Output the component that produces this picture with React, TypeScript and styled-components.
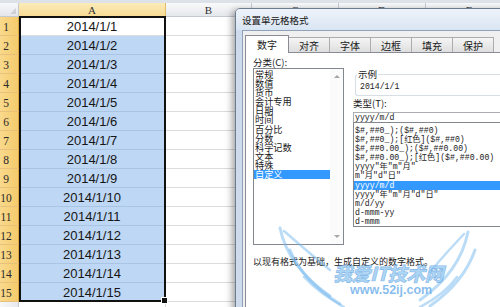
import React from 'react';
import styled, { createGlobalStyle, css } from 'styled-components';

const GlobalStyle = createGlobalStyle`
    html, body {
        margin: 0;
        padding: 0;
        background: #ffffff;
    }
    body {
        font-family: "Noto Sans CJK SC", "Noto Sans", sans-serif;
        color: #1a1a1a;
    }
`;

const Screen = styled.div`
    position: relative;
    width: 500px;
    height: 307px;
    overflow: hidden;
    background: #ffffff;
`;

/* ---------- worksheet ---------- */

const Toolbar = styled.div`
    height: 3px;
    background: #dde2e9;
`;

const Grid = styled.div`
    display: grid;
    grid-template-columns: 19px 147px 86px 87px 87px 87px;
    grid-template-rows: 14px repeat(16, 19px);
`;

type Place = { $r: number; $c: number };

const placed = css<Place>`
    grid-row: ${({ $r }) => $r};
    grid-column: ${({ $c }) => $c};
    box-sizing: border-box;
`;

const Corner = styled.div<Place>`
    ${placed};
    position: relative;
    background: linear-gradient(#f7f8fa, #e3e6ea);
    border-right: 1px solid #c5cad1;
    border-bottom: 1px solid #c5cad1;

    &::after {
        content: '';
        position: absolute;
        right: 2px;
        bottom: 2px;
        border-left: 6px solid transparent;
        border-bottom: 6px solid #cdd1d6;
    }
`;

const ColHeader = styled.div<Place & { $active?: boolean }>`
    ${placed};
    display: flex;
    align-items: center;
    justify-content: center;
    font-family: "Liberation Serif", serif;
    font-size: 11px;
    color: #333;
    background: ${({ $active }) =>
        $active ? 'linear-gradient(#fcebb8, #f8dc95)' : 'linear-gradient(#f9fafb, #e4e7eb)'};
    border-right: 1px solid ${({ $active }) => ($active ? '#e2bd66' : '#c5cad1')};
    border-bottom: 1px solid ${({ $active }) => ($active ? '#e2a93f' : '#c5cad1')};
`;

const RowHeader = styled.div<Place & { $active?: boolean }>`
    ${placed};
    display: flex;
    align-items: flex-end;
    justify-content: center;
    padding: 0 6px 1px 0;
    line-height: 13px;
    font-family: "Liberation Serif", serif;
    font-size: 11.5px;
    color: #2a2a2a;
    background: ${({ $active }) =>
        $active ? 'linear-gradient(90deg, #f9d98c, #f5cb6c)' : 'linear-gradient(90deg, #f7f8fa, #e6e9ed)'};
    border-right: 1px solid ${({ $active }) => ($active ? '#d9a843' : '#c5cad1')};
    border-bottom: 1px solid ${({ $active }) => ($active ? '#e8c27a' : '#d5d9de')};
`;

type Tone = 'active' | 'selected' | 'plain';

const Cell = styled.div<Place & { $tone: Tone }>`
    ${placed};
    display: flex;
    align-items: center;
    justify-content: center;
    font-family: "Liberation Sans", Arial, sans-serif;
    font-size: 13px;
    color: #161616;
    background: ${({ $tone }) => ($tone === 'selected' ? '#bed7f4' : '#ffffff')};
    border-right: 1px solid #d8dadc;
    border-bottom: 1px solid ${({ $tone }) => ($tone === 'selected' ? '#aac4e4' : '#dadcdd')};
`;

const Selection = styled.div`
    grid-column: 2;
    grid-row: 2 / span 15;
    margin-top: -1px;
    border: 2px solid #111111;
    position: relative;
    pointer-events: none;
`;

const FillHandle = styled.span`
    position: absolute;
    right: -4px;
    bottom: -4px;
    width: 5px;
    height: 5px;
    background: #111111;
    border: 1px solid #ffffff;
`;

/* ---------- format cells dialog ---------- */

const Dialog = styled.div`
    position: absolute;
    left: 235px;
    top: 8px;
    width: 285px;
    height: 310px;
    display: flex;
    flex-direction: column;
    border: 1px solid #6d7d90;
    border-radius: 5px 5px 0 0;
    background: #cddbed;
    box-shadow: -3px 2px 7px rgba(0, 0, 0, 0.35);
`;

const TitleBar = styled.div`
    height: 21px;
    flex: none;
    display: flex;
    align-items: center;
    padding-left: 6px;
    font-size: 9.5px;
    color: #111;
    background: linear-gradient(#eef3fa, #d9e5f3);
    border-radius: 4px 4px 0 0;
`;

const Client = styled.div`
    flex: 1;
    display: flex;
    flex-direction: column;
    margin-left: 6px;
    padding: 4px 0 0 2px;
    background: #f0f0f0;
    border-left: 1px solid #8fa2ba;
    border-top: 1px solid #8fa2ba;
`;

const TabStrip = styled.div`
    height: 17px;
    flex: none;
    display: flex;
    align-items: flex-end;
`;

const Tab = styled.div<{ $selected?: boolean; $width: number }>`
    position: relative;
    z-index: ${({ $selected }) => ($selected ? 1 : 0)};
    box-sizing: border-box;
    width: ${({ $width }) => $width}px;
    height: ${({ $selected }) => ($selected ? 18 : 15)}px;
    margin: 0 -1px ${({ $selected }) => ($selected ? -1 : 0)}px 0;
    display: flex;
    align-items: center;
    justify-content: center;
    font-size: 10px;
    color: #1a1a1a;
    border: 1px solid ${({ $selected }) => ($selected ? '#898c95' : '#acacac')};
    border-bottom: none;
    background: ${({ $selected }) => ($selected ? '#ffffff' : 'linear-gradient(#f5f5f5, #dedede)')};
`;

const Page = styled.div`
    flex: 1;
    display: grid;
    grid-template-columns: 91px 1fr;
    align-content: start;
    column-gap: 9px;
    padding-left: 7px;
    background: #ffffff;
    border: 1px solid #898c95;
    font-size: 9.5px;
`;

const Column = styled.div`
    display: flex;
    flex-direction: column;
    min-width: 0;
`;

const FieldLabel = styled.div`
    padding-top: 4px;
    line-height: 11px;
    white-space: nowrap;
`;

const CategoryList = styled.div`
    box-sizing: border-box;
    height: 177px;
    display: flex;
    border: 1px solid #828790;
`;

const CategoryItems = styled.div`
    flex: 1;
    padding-top: 1px;
`;

const CategoryItem = styled.div<{ $selected?: boolean }>`
    height: 9.1px;
    line-height: 9.1px;
    font-size: 9.2px;
    padding-left: 1px;
    white-space: nowrap;
    color: ${({ $selected }) => ($selected ? '#ffffff' : '#1a1a1a')};
    background: ${({ $selected }) => ($selected ? '#3399ff' : 'transparent')};
`;

const ScrollBar = styled.div`
    width: 13px;
    display: flex;
    flex-direction: column;
    justify-content: space-between;
    align-items: center;
    padding: 6px 0;
    background: #fbfbfb;
`;

const Arrow = styled.span<{ $down?: boolean }>`
    width: 0;
    height: 0;
    border-left: 3px solid transparent;
    border-right: 3px solid transparent;
    ${({ $down }) => ($down ? 'border-top: 3px solid #a6a6a6;' : 'border-bottom: 3px solid #a6a6a6;')}
`;

const SampleGroup = styled.div`
    box-sizing: border-box;
    height: 22px;
    margin: 21px 0 0 2px;
    display: flex;
    flex-direction: column;
    border: 1px solid #d5dfe5;
    border-right: none;
    border-radius: 3px 0 0 3px;
`;

const Legend = styled.span`
    align-self: flex-start;
    margin: -6px 0 0 1px;
    padding: 0 1px;
    line-height: 11px;
    background: #ffffff;
`;

const Mono = styled.div`
    font-family: "Liberation Mono", "Noto Sans CJK SC", monospace;
    font-size: 8.2px;
    white-space: pre;
`;

const SampleValue = styled(Mono)`
    margin-top: 2px;
    padding-left: 4px;
    line-height: 10px;
`;

const TypeLabel = styled.div`
    margin-top: 2px;
    line-height: 11px;
`;

const TypeInput = styled(Mono)`
    box-sizing: border-box;
    height: 11px;
    margin-top: 3px;
    padding-left: 1px;
    line-height: 9px;
    border: 1px solid #abadb3;
`;

const TypeList = styled.div`
    box-sizing: border-box;
    height: 105px;
    margin-top: -1px;
    padding-top: 2.5px;
    overflow: hidden;
    border: 1px solid #828790;
    border-right: none;
`;

const FormatItem = styled(Mono)<{ $selected?: boolean }>`
    height: 9.2px;
    line-height: 9.2px;
    padding-left: 1px;
    color: ${({ $selected }) => ($selected ? '#ffffff' : '#1a1a1a')};
    background: ${({ $selected }) => ($selected ? '#3399ff' : 'transparent')};
`;

const Hint = styled.div`
    grid-column: 1 / -1;
    margin-top: 11px;
    line-height: 12px;
    font-size: 9px;
    white-space: nowrap;
`;

/* ---------- site watermark ---------- */

const Watermark = styled.div`
    position: absolute;
    left: 270px;
    top: 222px;
    width: 225px;
    height: 85px;
    pointer-events: none;
    display: flex;
    flex-direction: column;
    padding: 41px 0 0 63px;
    box-sizing: border-box;
`;

const Wings = styled.svg`
    position: absolute;
    inset: 0;
`;

const MarkTitle = styled.div`
    position: relative;
    font-size: 19px;
    font-weight: 900;
    font-style: italic;
    line-height: 20px;
    letter-spacing: -0.5px;
    white-space: nowrap;
    color: rgba(135, 195, 240, 0.7);
    -webkit-text-stroke: 0.6px rgba(70, 140, 215, 0.5);
`;

const MarkUrl = styled.div`
    position: relative;
    margin: 2px 0 0 17px;
    font-family: "Liberation Sans", Arial, sans-serif;
    font-size: 12.5px;
    font-weight: bold;
    line-height: 11px;
    color: rgba(95, 168, 232, 0.75);
`;

const COLUMNS = ['A', 'B', 'C', 'D', 'E'];

const CATEGORIES = ['常规', '数值', '货币', '会计专用', '日期', '时间', '百分比', '分数', '科学记数', '文本', '特殊', '自定义'];

const FORMATS = [
    '$#,##0_);($#,##0)',
    '$#,##0_);[红色]($#,##0)',
    '$#,##0.00_);($#,##0.00)',
    '$#,##0.00_);[红色]($#,##0.00)',
    'yyyy"年"m"月"',
    'm"月"d"日"',
    'yyyy/m/d',
    'yyyy"年"m"月"d"日"',
    'm/d/yy',
    'd-mmm-yy',
    'd-mmm',
];

const TABS = [
    { label: '数字', width: 44 },
    { label: '对齐', width: 42 },
    { label: '字体', width: 42 },
    { label: '边框', width: 42 },
    { label: '填充', width: 42 },
    { label: '保护', width: 42 },
];

// 15 dated rows, plus the top sliver of row 16 under them
const ROWS = Array.from({ length: 16 }, (_, i) => i + 1);

function Worksheet() {
    return (
        <>
            <Toolbar />
            <Grid>
                <Corner $r={1} $c={1} />
                {COLUMNS.map((col, ci) => (
                    <ColHeader key={col} $r={1} $c={ci + 2} $active={col === 'A'}>
                        {col}
                    </ColHeader>
                ))}
                {ROWS.map(row => {
                    const inRange = row <= 15;
                    return (
                        <React.Fragment key={row}>
                            <RowHeader $r={row + 1} $c={1} $active={inRange}>
                                {inRange ? row : ''}
                            </RowHeader>
                            <Cell
                                $r={row + 1}
                                $c={2}
                                $tone={row === 1 ? 'active' : inRange ? 'selected' : 'plain'}
                            >
                                {inRange ? `2014/1/${row}` : ''}
                            </Cell>
                            {COLUMNS.slice(1).map((col, ci) => (
                                <Cell key={col} $r={row + 1} $c={ci + 3} $tone="plain" />
                            ))}
                        </React.Fragment>
                    );
                })}
                <Selection>
                    <FillHandle />
                </Selection>
            </Grid>
        </>
    );
}

function FormatDialog() {
    return (
        <Dialog>
            <TitleBar>设置单元格格式</TitleBar>
            <Client>
                <TabStrip>
                    {TABS.map((tab, i) => (
                        <Tab key={tab.label} $width={tab.width} $selected={i === 0}>
                            {tab.label}
                        </Tab>
                    ))}
                </TabStrip>
                <Page>
                    <Column>
                        <FieldLabel>分类(C):</FieldLabel>
                        <CategoryList>
                            <CategoryItems>
                                {CATEGORIES.map(name => (
                                    <CategoryItem key={name} $selected={name === '自定义'}>
                                        {name}
                                    </CategoryItem>
                                ))}
                            </CategoryItems>
                            <ScrollBar>
                                <Arrow />
                                <Arrow $down />
                            </ScrollBar>
                        </CategoryList>
                    </Column>
                    <Column>
                        <SampleGroup>
                            <Legend>示例</Legend>
                            <SampleValue>2014/1/1</SampleValue>
                        </SampleGroup>
                        <TypeLabel>类型(T):</TypeLabel>
                        <TypeInput>yyyy/m/d</TypeInput>
                        <TypeList>
                            {FORMATS.map(f => (
                                <FormatItem key={f} $selected={f === 'yyyy/m/d'}>
                                    {f}
                                </FormatItem>
                            ))}
                        </TypeList>
                    </Column>
                    <Hint>以现有格式为基础，生成自定义的数字格式。</Hint>
                </Page>
            </Client>
        </Dialog>
    );
}

function SiteMark() {
    return (
        <Watermark>
            <Wings width="225" height="85" viewBox="0 0 225 85" fill="none">
                <g stroke="rgba(120, 186, 240, 0.5)" strokeLinecap="round">
                    <path d="M10 6 Q18 45 60 74" strokeWidth="3" />
                    <path d="M14 9 Q38 30 60 48" strokeWidth="2.5" />
                    <path d="M20 28 Q32 58 70 82" strokeWidth="3" />
                    <path d="M34 55 Q50 72 74 85" strokeWidth="2.5" />
                    <path d="M198 10 Q190 50 150 78" strokeWidth="3" />
                    <path d="M194 12 Q175 32 160 50" strokeWidth="2.5" />
                    <path d="M205 28 Q194 60 160 84" strokeWidth="3" />
                    <path d="M187 55 Q175 72 150 85" strokeWidth="2.5" />
                </g>
            </Wings>
            <MarkTitle>我爱IT技术网</MarkTitle>
            <MarkUrl>www.52ij.com</MarkUrl>
        </Watermark>
    );
}

export default function App() {
    return (
        <>
            <GlobalStyle />
            <Screen>
                <Worksheet />
                <FormatDialog />
                <SiteMark />
            </Screen>
        </>
    );
}
